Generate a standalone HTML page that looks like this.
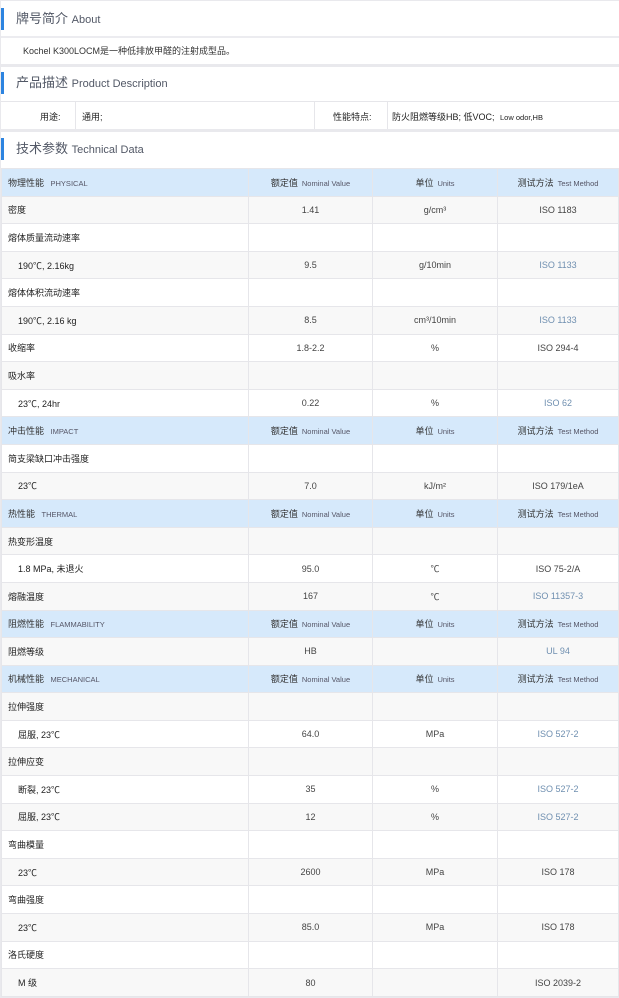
<!DOCTYPE html>
<html><head><meta charset="utf-8"><style>
*{margin:0;padding:0;box-sizing:border-box}
body{width:619px;height:998px;background:#e9e9ed;font-family:"Liberation Sans","Noto Sans CJK SC",sans-serif;color:#333;overflow:hidden;position:relative}
.p{position:absolute;left:1px;right:0;background:#fff}
.h{position:absolute;left:1px;right:0;height:30px;background:#fff;font-size:13px;color:#525866;line-height:30px;padding-left:15px}
.h:before{content:"";position:absolute;left:0;top:4px;width:3px;height:22px;background:#2d84e0}
.h span{font-size:11px}
table{position:absolute;left:1px;top:168px;width:618px;border-collapse:collapse;table-layout:fixed}
td{height:27.6px;border:1px solid #e6e6ea;font-size:9px;text-align:center;color:#444;padding:0;background:#fff}
td:first-child{text-align:left;padding-left:6px;color:#222}
tr.hd td{background:#d6e9fb;color:#333}
tr.hd td small{font-size:7.5px;color:#556;margin-left:4px}
tr.g td{background:#f8f8f8}
td.i{padding-left:16px!important}
.l{color:#6f8fb0}
</style></head><body>
<div class="p" style="top:1px;height:63px"></div>
<div class="h" style="top:4px">牌号简介 <span>About</span></div>
<div style="position:absolute;left:1px;right:0;top:36px;height:2px;background:#ececf0"></div>
<div style="position:absolute;left:23px;top:44px;font-size:9px;color:#333">Kochel K300LOCM是一种低排放甲醛的注射成型品。</div>
<div class="p" style="top:67px;height:62px"></div>
<div class="h" style="top:68px">产品描述 <span>Product Description</span></div>
<div style="position:absolute;left:1px;right:0;top:101px;height:1px;background:#e6e6ea"></div>
<div style="position:absolute;left:75px;top:102px;width:1px;height:27px;background:#e6e6ea"></div>
<div style="position:absolute;left:314px;top:102px;width:1px;height:27px;background:#e6e6ea"></div>
<div style="position:absolute;left:387px;top:102px;width:1px;height:27px;background:#e6e6ea"></div>
<div style="position:absolute;left:40px;top:110px;font-size:9px;color:#222">用途:</div>
<div style="position:absolute;left:82px;top:110px;font-size:9px;color:#222">通用;</div>
<div style="position:absolute;left:333px;top:110px;font-size:9px;color:#222">性能特点:</div>
<div style="position:absolute;left:392px;top:110px;font-size:9px;color:#222">防火阻燃等级HB; 低VOC; <span style="font-size:7.5px;margin-left:3px">Low odor,HB</span></div>
<div class="p" style="top:132px;height:36px"></div>
<div class="h" style="top:134px">技术参数 <span>Technical Data</span></div>
<table>
<colgroup><col style="width:247px"><col style="width:124px"><col style="width:125px"><col></colgroup>
<tr class="hd"><td>物理性能 <small>PHYSICAL</small></td><td>额定值<small>Nominal Value</small></td><td>单位<small>Units</small></td><td>测试方法<small>Test Method</small></td></tr>
<tr class="g"><td>密度</td><td>1.41</td><td>g/cm³</td><td>ISO 1183</td></tr>
<tr><td>熔体质量流动速率</td><td></td><td></td><td></td></tr>
<tr class="g"><td class="i">190℃, 2.16kg</td><td>9.5</td><td>g/10min</td><td class="l">ISO 1133</td></tr>
<tr><td>熔体体积流动速率</td><td></td><td></td><td></td></tr>
<tr class="g"><td class="i">190℃, 2.16 kg</td><td>8.5</td><td>cm³/10min</td><td class="l">ISO 1133</td></tr>
<tr><td>收缩率</td><td>1.8-2.2</td><td>%</td><td>ISO 294-4</td></tr>
<tr class="g"><td>吸水率</td><td></td><td></td><td></td></tr>
<tr><td class="i">23℃, 24hr</td><td>0.22</td><td>%</td><td class="l">ISO 62</td></tr>
<tr class="hd"><td>冲击性能 <small>IMPACT</small></td><td>额定值<small>Nominal Value</small></td><td>单位<small>Units</small></td><td>测试方法<small>Test Method</small></td></tr>
<tr><td>简支梁缺口冲击强度</td><td></td><td></td><td></td></tr>
<tr class="g"><td class="i">23℃</td><td>7.0</td><td>kJ/m²</td><td>ISO 179/1eA</td></tr>
<tr class="hd"><td>热性能 <small>THERMAL</small></td><td>额定值<small>Nominal Value</small></td><td>单位<small>Units</small></td><td>测试方法<small>Test Method</small></td></tr>
<tr class="g"><td>热变形温度</td><td></td><td></td><td></td></tr>
<tr><td class="i">1.8 MPa, 未退火</td><td>95.0</td><td>℃</td><td>ISO 75-2/A</td></tr>
<tr class="g"><td>熔融温度</td><td>167</td><td>℃</td><td class="l">ISO 11357-3</td></tr>
<tr class="hd"><td>阻燃性能 <small>FLAMMABILITY</small></td><td>额定值<small>Nominal Value</small></td><td>单位<small>Units</small></td><td>测试方法<small>Test Method</small></td></tr>
<tr class="g"><td>阻燃等级</td><td>HB</td><td></td><td class="l">UL 94</td></tr>
<tr class="hd"><td>机械性能 <small>MECHANICAL</small></td><td>额定值<small>Nominal Value</small></td><td>单位<small>Units</small></td><td>测试方法<small>Test Method</small></td></tr>
<tr class="g"><td>拉伸强度</td><td></td><td></td><td></td></tr>
<tr><td class="i">屈服, 23℃</td><td>64.0</td><td>MPa</td><td class="l">ISO 527-2</td></tr>
<tr class="g"><td>拉伸应变</td><td></td><td></td><td></td></tr>
<tr><td class="i">断裂, 23℃</td><td>35</td><td>%</td><td class="l">ISO 527-2</td></tr>
<tr class="g"><td class="i">屈服, 23℃</td><td>12</td><td>%</td><td class="l">ISO 527-2</td></tr>
<tr><td>弯曲模量</td><td></td><td></td><td></td></tr>
<tr class="g"><td class="i">23℃</td><td>2600</td><td>MPa</td><td>ISO 178</td></tr>
<tr><td>弯曲强度</td><td></td><td></td><td></td></tr>
<tr class="g"><td class="i">23℃</td><td>85.0</td><td>MPa</td><td>ISO 178</td></tr>
<tr><td>洛氏硬度</td><td></td><td></td><td></td></tr>
<tr class="g"><td class="i">M 级</td><td>80</td><td></td><td>ISO 2039-2</td></tr>
</table>
</body></html>
